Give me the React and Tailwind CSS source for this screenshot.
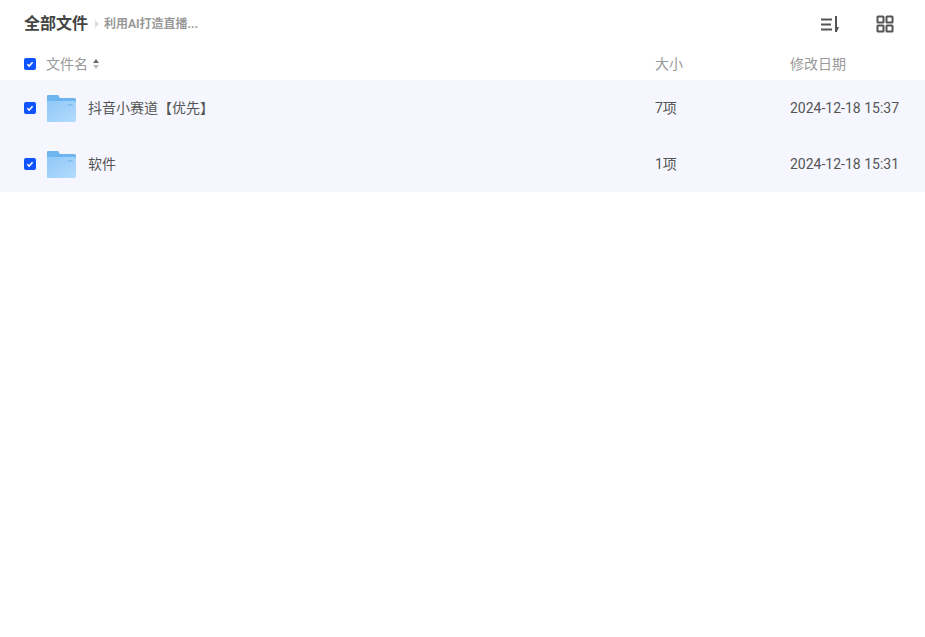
const font = { fontFamily: 'Roboto, "Noto Sans CJK SC", sans-serif' };

function Check() {
  return (
    <span className="w-3 h-3 rounded-[2px] bg-[#0d53ff] flex items-center justify-center shrink-0">
      <svg width="8" height="8" viewBox="0 0 8 8" fill="none">
        <path d="M1.4 4.2 3.2 6 6.6 2.2" stroke="#fff" strokeWidth="1.6" />
      </svg>
    </span>
  );
}

function Folder() {
  return (
    <svg width="29" height="27" viewBox="0 0 29 27" className="shrink-0">
      <defs>
        <linearGradient id="fold" x1="0" y1="0" x2="1" y2="1">
          <stop offset="0" stopColor="#8fc8f8" />
          <stop offset="1" stopColor="#b3dafd" />
        </linearGradient>
      </defs>
      <path d="M1 0h10l2 3h14a2 2 0 0 1 2 2v3H0V1a1 1 0 0 1 1-1z" fill="#6eb4ef" />
      <path d="M0 6h27a2 2 0 0 1 2 2v17a2 2 0 0 1-2 2H1a1 1 0 0 1-1-1z" fill="url(#fold)" />
      <rect x="21" y="9" width="5" height="2" rx="1" fill="#84bff3" />
    </svg>
  );
}

function Row({ name, size, date }) {
  return (
    <div className="h-14 bg-[#f6f7fe] flex items-center pl-6 text-sm text-[#555]">
      <Check />
      <div className="ml-[11px] w-[41px] pt-px">
        <Folder />
      </div>
      <div className="w-[567px]">{name}</div>
      <div className="w-[135px]">{size}</div>
      <div>{date}</div>
    </div>
  );
}

export default function App() {
  return (
    <div className="min-h-screen bg-white" style={font}>
      <div className="h-[48px] flex items-center pl-6">
        <span className="text-base font-bold text-[#444]">全部文件</span>
        <span className="ml-[7px] w-0 h-0 border-y-[4px] border-y-transparent border-l-[4px] border-l-[#ddd]" />
        <span className="ml-[5px] text-xs font-bold text-[#999]">利用AI打造直播...</span>
        <div className="ml-auto flex items-center gap-[36px] pr-[31px]">
          <svg width="20" height="18" viewBox="0 0 20 18" fill="none" stroke="#555" strokeWidth="2">
            <path d="M1 4.500h11M1 9.500h10M1 14.500h11M16 1v16" />
            <path d="M17 12h2l-2 4.500z" fill="#555" stroke="none" />
          </svg>
          <svg width="18" height="18" viewBox="0 0 18 18" fill="none" stroke="#555" strokeWidth="2">
            <rect x="1.500" y="1.500" width="6" height="6" rx="0.500" />
            <rect x="10.500" y="1.500" width="6" height="6" rx="0.500" />
            <rect x="1.500" y="10.500" width="6" height="6" rx="0.500" />
            <rect x="10.500" y="10.500" width="6" height="6" rx="0.500" />
          </svg>
        </div>
      </div>
      <div className="h-8 flex items-center pl-6 text-sm text-[#999]">
        <Check />
        <span className="ml-[10px] w-[47px]">文件名</span>
        <span className="flex flex-col gap-[2px]">
          <span className="w-0 h-0 border-x-[3px] border-x-transparent border-b-[4px] border-b-[#666]" />
          <span className="w-0 h-0 border-x-[3px] border-x-transparent border-t-[4px] border-t-[#bbb]" />
        </span>
        <span className="ml-[556px] w-[135px]">大小</span>
        <span>修改日期</span>
      </div>
      <Row name="抖音小赛道【优先】" size="7项" date="2024-12-18 15:37" />
      <Row name="软件" size="1项" date="2024-12-18 15:31" />
    </div>
  );
}
